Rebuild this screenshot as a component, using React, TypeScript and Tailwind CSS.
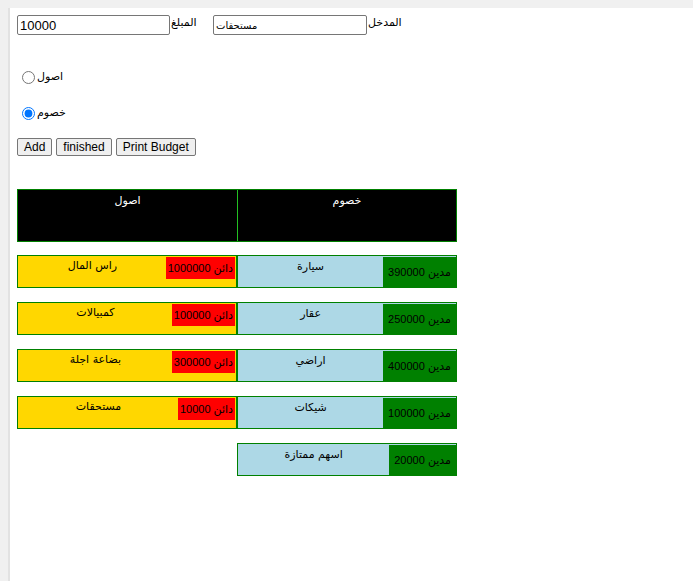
import React, { useState } from 'react';

interface Entry {
    name: string;
    amount: number;
}

const assets: Entry[] = [
    { name: 'راس المال', amount: 1000000 },
    { name: 'كمبيالات', amount: 100000 },
    { name: 'بضاعة اجلة', amount: 300000 },
    { name: 'مستحقات', amount: 10000 },
];

const liabilities: Entry[] = [
    { name: 'سيارة', amount: 390000 },
    { name: 'عقار', amount: 250000 },
    { name: 'اراضي', amount: 400000 },
    { name: 'شيكات', amount: 100000 },
    { name: 'اسهم ممتازة', amount: 20000 },
];

const arabic = { fontFamily: '"DejaVu Sans", "Liberation Sans", sans-serif' };
const boxFont = { fontFamily: '"Liberation Sans", "DejaVu Sans", sans-serif' };

function AssetCell({ entry }: { entry: Entry }) {
    return (
        <div className="flex h-[33px] w-[220px] border border-[#008000] bg-[#ffd700] p-[1px]">
            <div className="flex-1 text-center text-[11px] leading-[18px] text-black" style={arabic}>
                {entry.name}
            </div>
            <div className="flex h-[22px] items-center bg-[#ff0000] px-[2px] text-[11px] tracking-[-0.4px] text-black" style={boxFont}>
                <span dir="rtl">دائن {entry.amount}</span>
            </div>
        </div>
    );
}

function LiabilityCell({ entry }: { entry: Entry }) {
    return (
        <div className="flex h-[33px] w-[220px] border border-[#008000] bg-[#add8e6] pt-[1px]">
            <div className="flex-1 pt-[1px] text-center text-[11px] leading-[18px] text-black" style={arabic}>
                {entry.name}
            </div>
            <div className="flex h-[30px] items-center bg-[#008000] px-[5px] text-[11px] tracking-[-0.4px] text-black" style={boxFont}>
                <span dir="rtl">مدين {entry.amount}</span>
            </div>
        </div>
    );
}

export default function App() {
    const [amount, setAmount] = useState('10000');
    const [entry, setEntry] = useState('مستحقات');
    const [side, setSide] = useState('liabilities');

    const rows = Math.max(assets.length, liabilities.length);

    return (
        <div className="min-h-screen bg-[#f0f0f0] pl-[8px] pt-[8px]">
            <div className="min-h-[573px] border-l-[2px] border-[#e2e2e2] bg-white pl-[7px] pt-[7px]">
                <div className="flex items-start">
                    <input
                        className="h-[20px] w-[153px] rounded-[2px] border border-[#767676] px-[2px] text-[13px] text-black"
                        style={{ fontFamily: '"Liberation Sans", sans-serif' }}
                        value={amount}
                        onChange={(e) => setAmount(e.target.value)}
                    />
                    <label className="w-[43px] pl-[1px] text-[11px] leading-[15px]" style={arabic}>
                        المبلغ
                    </label>
                    <input
                        className="h-[20px] w-[154px] rounded-[2px] border border-[#767676] px-[2px] text-[10px] text-black"
                        style={arabic}
                        value={entry}
                        onChange={(e) => setEntry(e.target.value)}
                    />
                    <label className="ml-[1px] text-[11px] leading-[15px]" style={arabic}>
                        المدخل
                    </label>
                </div>

                <div className="mt-[36px] flex h-[13px] items-center">
                    <input
                        type="radio"
                        name="side"
                        className="ml-[5px] mr-[2px] h-[13px] w-[13px] accent-[#0075ff]"
                        checked={side === 'assets'}
                        onChange={() => setSide('assets')}
                    />
                    <span className="text-[11px]" style={arabic}>
                        اصول
                    </span>
                </div>
                <div className="mt-[23px] flex h-[13px] items-center">
                    <input
                        type="radio"
                        name="side"
                        className="ml-[5px] mr-[2px] h-[13px] w-[13px] accent-[#0075ff]"
                        checked={side === 'liabilities'}
                        onChange={() => setSide('liabilities')}
                    />
                    <span className="text-[11px]" style={arabic}>
                        خصوم
                    </span>
                </div>

                <div className="mt-[18px] flex gap-[4px] text-[12px]" style={{ fontFamily: '"Liberation Sans", sans-serif' }}>
                    <button className="h-[18px] rounded-[2px] border border-[#767676] bg-[#efefef] px-[6px] leading-none text-black">Add</button>
                    <button className="h-[18px] rounded-[2px] border border-[#767676] bg-[#efefef] px-[6px] leading-none text-black">finished</button>
                    <button className="h-[18px] rounded-[2px] border border-[#767676] bg-[#efefef] px-[6px] leading-none text-black">Print Budget</button>
                </div>

                <div className="mt-[33px] flex h-[53px] w-[440px] border border-[#008000] bg-black">
                    <div className="w-[219px] pt-[3px] text-center text-[11px] text-white" style={arabic}>
                        اصول
                    </div>
                    <div className="w-[1px] bg-[#22c022]" />
                    <div className="flex-1 pt-[3px] text-center text-[11px] text-white" style={arabic}>
                        خصوم
                    </div>
                </div>

                <div className="mt-[13px] flex flex-col gap-[14px]">
                    {Array.from({ length: rows }).map((_, i) => (
                        <div key={i} className="flex">
                            {assets[i] ? <AssetCell entry={assets[i]} /> : <div className="w-[220px]" />}
                            {liabilities[i] && <LiabilityCell entry={liabilities[i]} />}
                        </div>
                    ))}
                </div>
            </div>
        </div>
    );
}
